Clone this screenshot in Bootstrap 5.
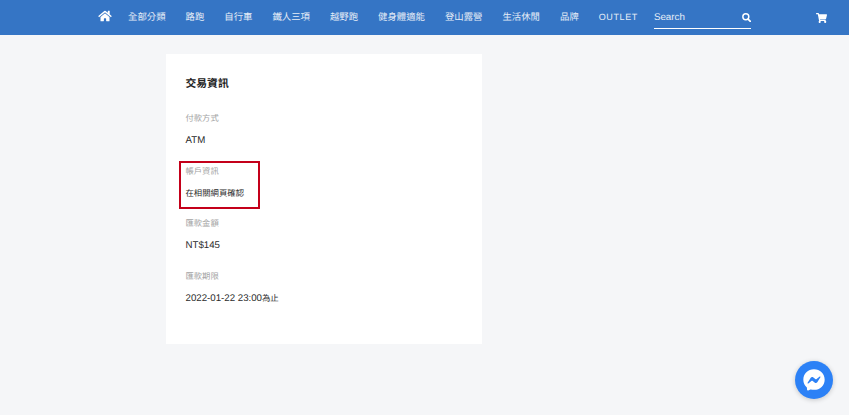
<!DOCTYPE html>
<html lang="zh-Hant">
<head>
<meta charset="utf-8">
<title>交易資訊</title>
<link href="https://cdn.jsdelivr.net/npm/bootstrap@5.3.0/dist/css/bootstrap.min.css" rel="stylesheet">
<style>
html,body{height:100%;}
body{background:#f5f6f8;font-family:"Liberation Sans","Noto Sans CJK TC",sans-serif;overflow:hidden;text-rendering:geometricPrecision;}
.topbar{height:35px;background:#3575c5;padding:0 0 0 98px;}
.home-link{width:14px;margin-right:16px;line-height:0;margin-top:-3px;}
.top-links{gap:20px;}
.top-links a{color:#e6edf7;font-size:9.4px;letter-spacing:0;text-decoration:none;white-space:nowrap;}
.top-links a.latin{letter-spacing:.6px;font-size:9px;}
.search-box{width:97px;height:20px;margin:2px 0 0 16px;border-bottom:1px solid #fff;color:#e6edf7;font-size:9.8px;padding-top:2px;}
.search-box svg{margin-top:2px;}
.cart-link{margin-left:65px;line-height:0;}
.info-panel{width:315.500px;height:290px;margin:19px 0 0 166px;background:#fff;padding:23px 19.500px 0;position:relative;}
.panel-title{font-size:10.800px;font-weight:700;color:#222;line-height:14px;margin:0 0 21px;}
.field-label{font-size:8.300px;line-height:12px;color:#a3a3a3;margin:0 0 10.500px;}
.field-value{font-size:9.700px;line-height:12px;color:#2b2b2b;margin:0 0 18px;}
.field-value.cjk,.cjk-part{font-size:8.400px;}
.red-box{position:absolute;left:13px;top:107px;width:81px;height:48px;border:2px solid #c4001a;}
.chat-bubble{position:fixed;right:16px;bottom:16px;width:38px;height:38px;border-radius:50%;background:#2c81f6;box-shadow:0 1px 5px rgba(0,0,0,.2);}
</style>
</head>
<body>
<nav class="topbar d-flex align-items-center">
  <a class="home-link d-block" href="#" aria-label="首頁">
    <svg width="14" height="12" viewBox="0 0 576 512"><path fill="#fff" d="M280 148 96 300v164a16 16 0 0 0 16 16l112-.3a16 16 0 0 0 16-16V368a16 16 0 0 1 16-16h64a16 16 0 0 1 16 16v95.600a16 16 0 0 0 16 16l112 .4a16 16 0 0 0 16-16V300L296 148a12 12 0 0 0-16 0zM572 251l-84-69V44a12 12 0 0 0-12-12h-56a12 12 0 0 0-12 12v72l-90-74a48 48 0 0 0-61 0L4 251a12 12 0 0 0-2 17l26 31a12 12 0 0 0 17 2L280 107a12 12 0 0 1 16 0l235 194a12 12 0 0 0 17-2l26-31a12 12 0 0 0-2-17z"/></svg>
  </a>
  <div class="top-links d-flex align-items-center">
    <a href="#">全部分類</a><a href="#">路跑</a><a href="#">自行車</a><a href="#">鐵人三項</a><a href="#">越野跑</a><a href="#">健身體適能</a><a href="#">登山露營</a><a href="#">生活休閒</a><a href="#">品牌</a><a class="latin" href="#">OUTLET</a>
  </div>
  <div class="search-box d-flex justify-content-between">
    <span>Search</span>
    <svg width="9" height="9" viewBox="0 0 16 16"><circle cx="6.800" cy="6.800" r="5.300" fill="none" stroke="#fff" stroke-width="2.600"/><path d="m10.800 10.800 4 4" stroke="#fff" stroke-width="3" stroke-linecap="round"/></svg>
  </div>
  <a class="cart-link d-block" href="#" aria-label="購物車">
    <svg width="11" height="10" viewBox="0 0 576 512"><path fill="#fff" d="M528 301 575 93a24 24 0 0 0-23-29H159l-9-45A24 24 0 0 0 126 0H24A24 24 0 0 0 0 24v16a24 24 0 0 0 24 24h70l70 343a56 56 0 1 0 67 9h210a56 56 0 1 0 64-10l6-24a24 24 0 0 0-24-29H218l-7-32h293a24 24 0 0 0 24-20z"/></svg>
  </a>
</nav>
<main class="info-panel">
  <h1 class="panel-title">交易資訊</h1>
  <p class="field-label">付款方式</p>
  <p class="field-value">ATM</p>
  <p class="field-label">帳戶資訊</p>
  <p class="field-value cjk">在相關網頁確認</p>
  <p class="field-label">匯款金額</p>
  <p class="field-value">NT$145</p>
  <p class="field-label">匯款期限</p>
  <p class="field-value">2022-01-22 23:00<span class="cjk-part">為止</span></p>
  <div class="red-box"></div>
</main>
<a class="chat-bubble d-flex align-items-center justify-content-center" href="#" aria-label="Messenger">
  <svg width="26" height="26" viewBox="0 0 28 28"><path fill="#fff" d="M14 2.500C7.500 2.500 2.500 7.200 2.500 13.600c0 3.300 1.400 6.200 3.600 8.200.2.200.3.400.3.700l.1 2c0 .6.700 1 1.300.8l2.300-1c.2-.1.400-.1.600-.1 1.100.3 2.200.4 3.300.4 6.500 0 11.500-4.700 11.500-11 0-6.400-5-11.100-11.500-11.100z"/><path fill="#2c81f6" d="m7.100 17 3.400-5.400c.5-.9 1.700-1.100 2.500-.5l2.700 2c.3.200.6.200.8 0l3.600-2.800c.5-.4 1.100.2.800.7l-3.400 5.400c-.5.900-1.700 1.100-2.500.5l-2.700-2c-.3-.2-.6-.2-.8 0l-3.600 2.800c-.5.400-1.100-.2-.8-.700z"/></svg>
</a>
<script src="https://cdn.jsdelivr.net/npm/bootstrap@5.3.0/dist/js/bootstrap.bundle.min.js"></script>
</body>
</html>
